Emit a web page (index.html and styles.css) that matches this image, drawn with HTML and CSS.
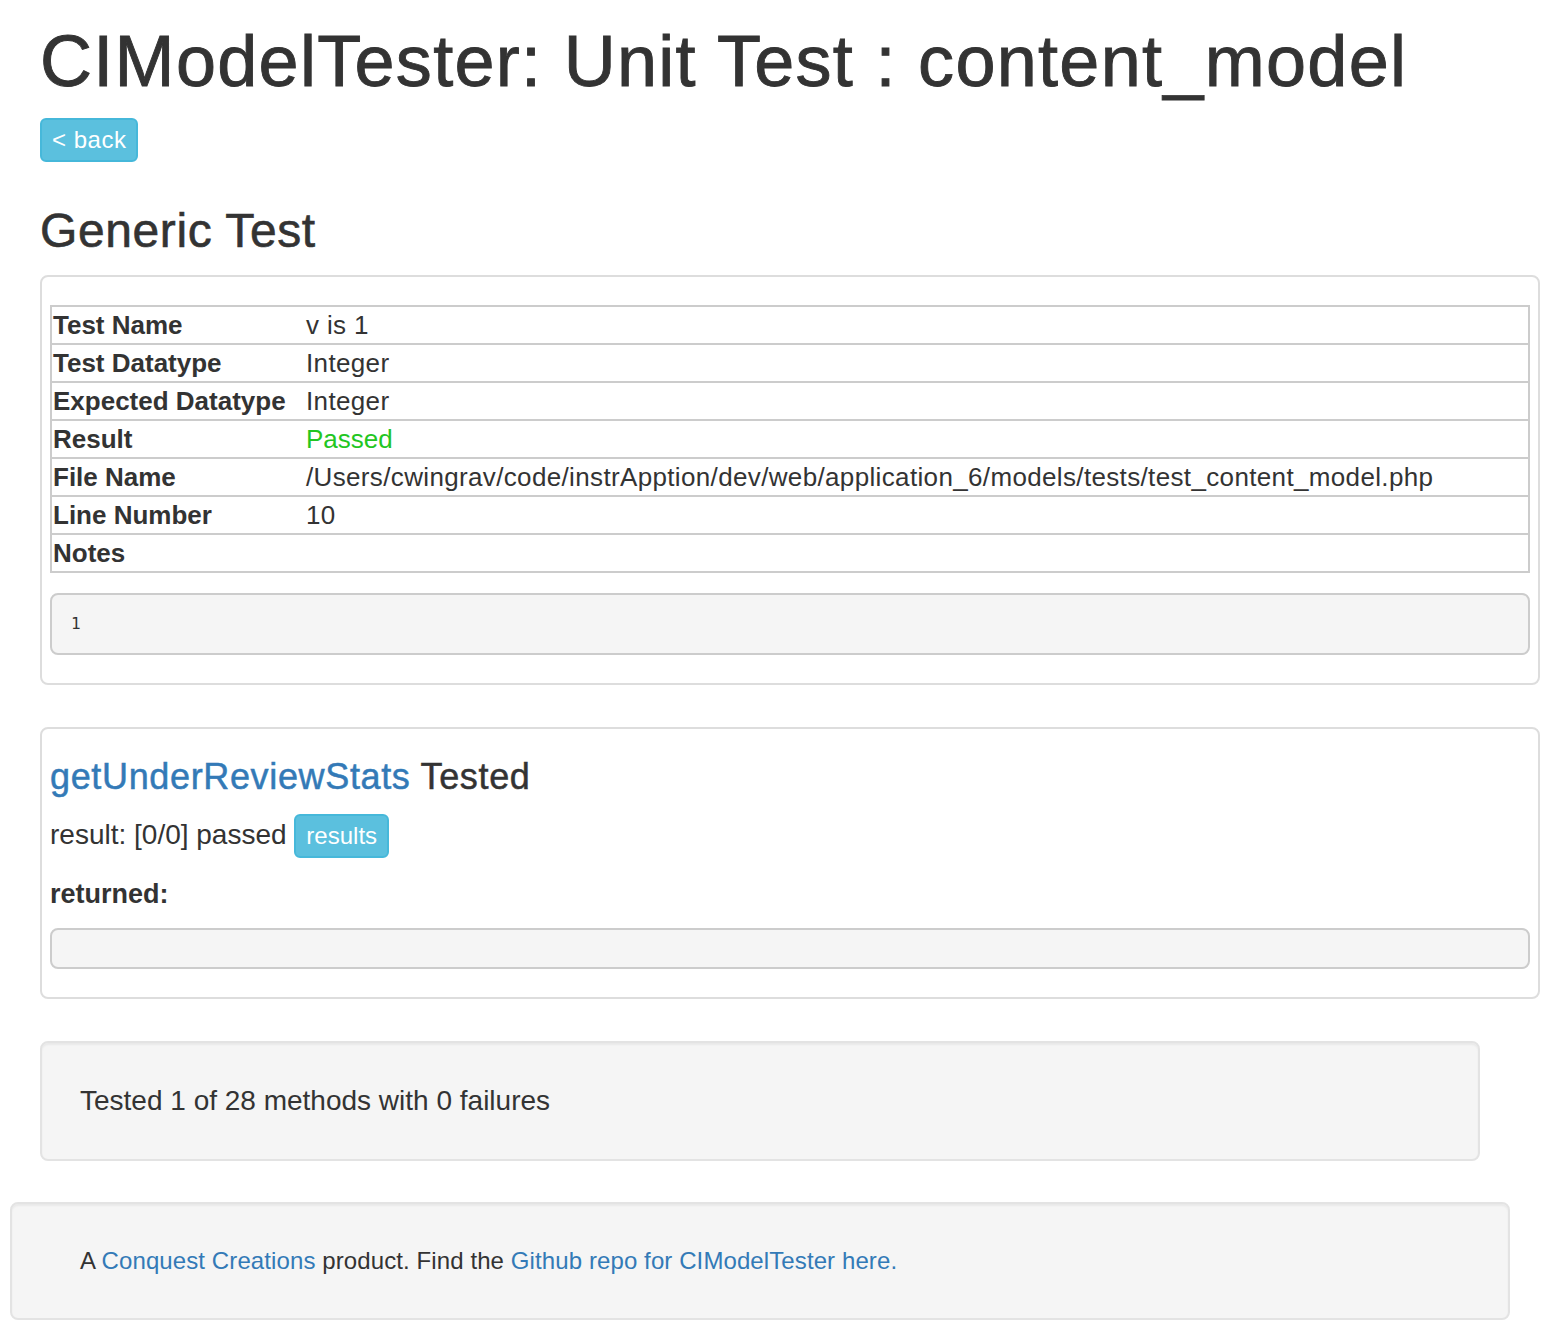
FILE: index.html
```html
<!DOCTYPE html>
<html lang="en">
<head>
<meta charset="utf-8">
<title>CIModelTester: Unit Test : content_model</title>
<link rel="stylesheet" href="styles.css">
</head>
<body>
<div class="page">
  <h1 class="title">CIModelTester: Unit Test : content_model</h1>
  <div class="back-row"><a class="btn btn-info btn-back" href="#">&lt; back</a></div>

  <h3 class="section-title">Generic Test</h3>
  <div class="panel">
    <table class="info">
      <tr><th class="k">Test Name</th><td class="v">v is 1</td></tr>
      <tr><th class="k">Test Datatype</th><td class="v">Integer</td></tr>
      <tr><th class="k">Expected Datatype</th><td class="v">Integer</td></tr>
      <tr><th class="k">Result</th><td class="v passed">Passed</td></tr>
      <tr><th class="k">File Name</th><td class="v">/Users/cwingrav/code/instrApption/dev/web/application_6/models/tests/test_content_model.php</td></tr>
      <tr><th class="k">Line Number</th><td class="v">10</td></tr>
      <tr><th class="k">Notes</th><td class="v"></td></tr>
    </table>
    <pre class="code">1</pre>
  </div>

  <div class="panel panel-method">
    <h4 class="method-title"><a href="#">getUnderReviewStats</a> Tested</h4>
    <p class="result">result: [0/0] passed <a class="btn btn-info" href="#">results</a></p>
    <div class="returned">returned:</div>
    <pre class="code code-empty"></pre>
  </div>

  <div class="well well-summary">Tested 1 of 28 methods with 0 failures</div>

  <div class="well well-footer">A <a href="#">Conquest Creations</a> product. Find the <a href="#">Github repo for CIModelTester here.</a></div>
</div>
</body>
</html>
```

FILE: styles.css
```css
html, body {
  margin: 0;
  padding: 0;
  background: #fff;
}

body {
  font-family: "Liberation Sans", Arial, Helvetica, sans-serif;
  font-size: 28px;
  line-height: 40px;
  color: #333;
}

a {
  color: #337ab7;
  text-decoration: none;
}

.page {
  padding: 0 0 17px 40px;
  width: 1500px;
}

.title {
  margin: 22px 0 0;
  font-size: 72px;
  line-height: 79px;
  font-weight: 500;
  letter-spacing: 1.3px;
  -webkit-text-stroke: 0.9px #333;
  color: #333;
  white-space: nowrap;
}

.back-row {
  display: flex;
  margin-top: 17px;
}

.btn {
  display: inline-block;
  font-size: 24px;
  line-height: 36px;
  padding: 2px 10px;
  border: 2px solid transparent;
  border-radius: 6px;
  color: #fff;
}

.btn-back {
  letter-spacing: 0.5px;
}

.btn-info {
  background: #5bc0de;
  border-color: #46b8da;
  color: #fff;
}

.section-title {
  margin: 42px 0 18px;
  font-size: 48px;
  line-height: 53px;
  font-weight: 500;
  letter-spacing: 0.6px;
  -webkit-text-stroke: 0.6px #333;
  color: #333;
}

.panel {
  box-sizing: border-box;
  width: 1500px;
  border: 2px solid #ddd;
  border-radius: 8px;
  padding: 28px 8px 8px;
  background: #fff;
}

.info {
  width: 100%;
  table-layout: fixed;
  border-collapse: collapse;
  border: 2px solid #ccc;
  margin: 0 0 20px;
  font-size: 26px;
  line-height: 34px;
}

.info tr {
  border-top: 2px solid #ccc;
  border-bottom: 2px solid #ccc;
}

.info .k {
  width: 250px;
  padding: 1px;
  text-align: left;
  font-weight: bold;
  white-space: nowrap;
}

.info .v {
  padding: 1px 2px;
  white-space: nowrap;
  letter-spacing: 0.35px;
}

.info .passed {
  color: #22c622;
  letter-spacing: 0;
}

.code {
  margin: 0 0 20px;
  padding: 19px;
  border: 2px solid #ccc;
  border-radius: 8px;
  background: #f5f5f5;
  font-family: "DejaVu Sans Mono", "Liberation Mono", monospace;
  font-size: 16px;
  line-height: 20px;
  color: #333;
}

.code-empty {
  margin-top: 15px;
  padding: 19px 19px 18px;
}

.panel-method {
  margin-top: 42px;
}

.method-title {
  margin: 0;
  font-size: 36px;
  line-height: 40px;
  font-weight: 500;
  letter-spacing: 0.65px;
  -webkit-text-stroke: 0.5px currentColor;
  color: #333;
}

.method-title a {
  -webkit-text-stroke: 0.5px #337ab7;
}

.result {
  margin: 17px 0 0;
}

.returned {
  margin-top: 17px;
  font-size: 27px;
  line-height: 38px;
  font-weight: bold;
}

.well {
  box-sizing: border-box;
  background: #f5f5f5;
  border: 2px solid #e3e3e3;
  border-radius: 8px;
  box-shadow: inset 0 2px 2px rgba(0, 0, 0, 0.05);
}

.well-summary {
  margin-top: 42px;
  width: 1440px;
  padding: 38px;
}

.well-footer {
  margin-top: 41px;
  margin-left: -30px;
  width: 1500px;
  padding: 40px 40px 40px 68px;
  font-size: 24px;
  line-height: 34px;
  letter-spacing: 0.1px;
}
```
